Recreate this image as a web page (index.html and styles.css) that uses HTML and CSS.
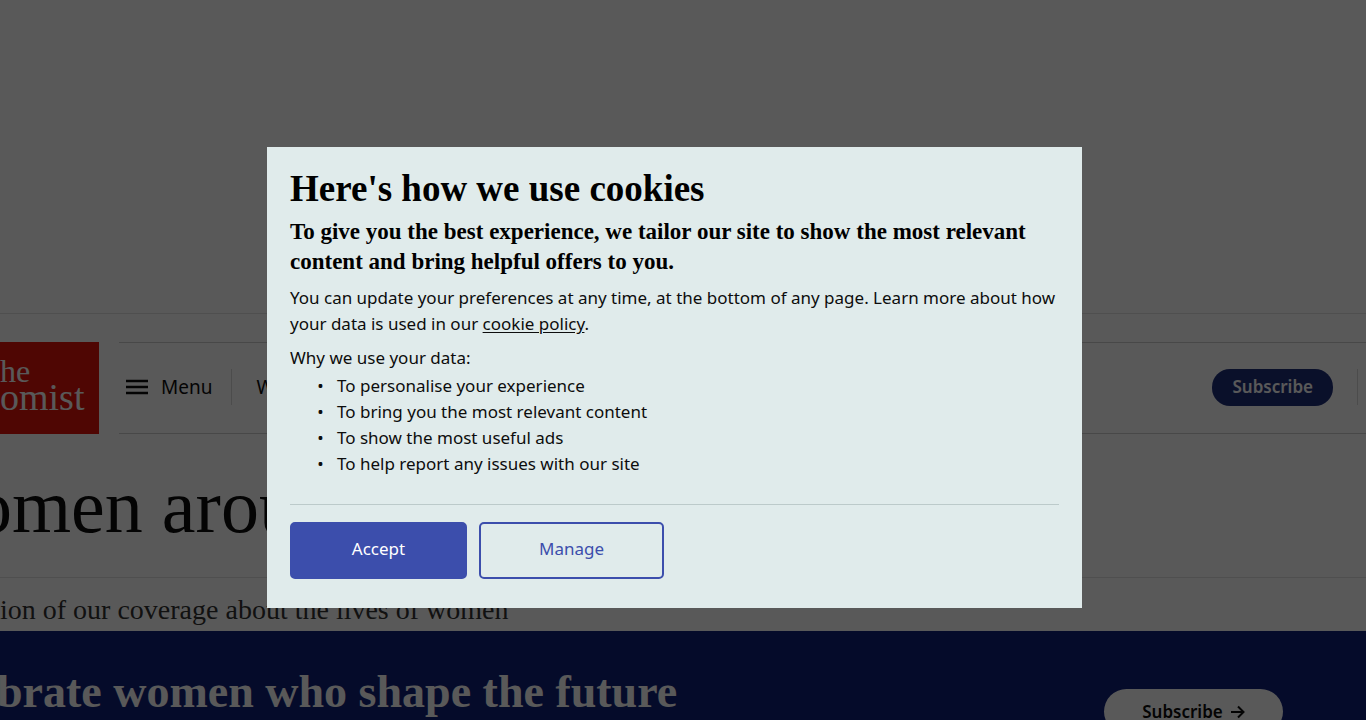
FILE: index.html
```
<!DOCTYPE html>
<html lang="en">
<head>
<meta charset="utf-8">
<meta name="viewport" content="width=device-width, initial-scale=1">
<title>Women around the world | The Economist</title>
<link rel="stylesheet" href="styles.css">
</head>
<body>
<div class="page">
  <div class="ad-slot"></div>
  <header class="masthead">
    <a class="logo" href="#"><span class="logo-top">he</span><span class="logo-bottom">omist</span></a>
    <nav class="nav">
      <button class="menu" type="button">
        <svg class="menu-icon" viewBox="0 0 22 16" aria-hidden="true"><path d="M0 2h22M0 8h22M0 14h22" stroke="currentColor" stroke-width="2.500"/></svg>
        Menu
      </button>
      <a class="nav-link" href="#">Weekly edition</a>
      <a class="subscribe" href="#">Subscribe</a>
      <span class="nav-end"></span>
    </nav>
  </header>
  <main>
    <h1 class="headline">omen around</h1>
    <p class="description">ion of our coverage about the lives of women</p>
  </main>
  <section class="banner">
    <h2 class="banner-title">brate women who shape the future</h2>
    <a class="banner-button" href="#">Subscribe
      <svg class="arrow" viewBox="0 0 14 14" aria-hidden="true"><path d="M0 7h12M7 1.500l5.500 5.500-5.500 5.500" fill="none" stroke="currentColor" stroke-width="2"/></svg>
    </a>
  </section>
</div>
<div class="overlay">
  <section class="dialog" role="dialog" aria-modal="true" aria-labelledby="cookie-title">
    <h2 class="dialog-title" id="cookie-title">Here's how we use cookies</h2>
    <p class="lead">To give you the best experience, we tailor our site to show the most relevant content and bring helpful offers to you.</p>
    <p class="text">You can update your preferences at any time, at the bottom of any page. Learn more about how your data is used in our <a class="policy" href="#">cookie policy</a>.</p>
    <p class="text">Why we use your data:</p>
    <ul class="reasons">
      <li>To personalise your experience</li>
      <li>To bring you the most relevant content</li>
      <li>To show the most useful ads</li>
      <li>To help report any issues with our site</li>
    </ul>
    <div class="actions">
      <button class="button accept" type="button">Accept</button>
      <button class="button manage" type="button">Manage</button>
    </div>
  </section>
</div>
</body>
</html>
```
FILE: styles.css
```
* {
  box-sizing: border-box;
}

body {
  margin: 0;
  background: #fff;
  color: #0d0d0d;
  font-family: "Noto Sans", sans-serif;
  font-size: 17px;
  line-height: 26px;
}

h1, h2, p, ul {
  margin: 0;
}

a {
  color: inherit;
  text-decoration: none;
}

button {
  font: inherit;
  color: inherit;
  cursor: pointer;
}

.page {
  height: 100vh;
  overflow: hidden;
}

.ad-slot {
  height: 314px;
  border-bottom: 1px solid #e1e1e1;
}

.masthead {
  display: flex;
  gap: 20px;
  padding-top: 28px;
}

.logo {
  display: flex;
  flex-direction: column;
  width: 99px;
  height: 92px;
  padding-top: 16px;
  background: #e3120b;
  color: #fff;
  font-family: "Liberation Serif", serif;
  font-size: 32px;
  line-height: 26px;
}

.logo-bottom {
  font-size: 38px;
}

.nav {
  display: flex;
  flex: 1;
  align-items: center;
  height: 92px;
  padding: 0 0 2px 7px;
  border-top: 1px solid #cfcfcf;
  border-bottom: 1px solid #cfcfcf;
  font-size: 19px;
}

.menu {
  display: flex;
  align-items: center;
  gap: 13px;
  height: 36px;
  padding: 0 19px 0 0;
  border: 0;
  border-right: 1px solid #d9d9d9;
  background: none;
}

.menu-icon {
  width: 22px;
  height: 16px;
}

.nav-link {
  padding-left: 24px;
}

.subscribe {
  margin-left: auto;
  padding: 5px 20px 6px;
  border-radius: 18px;
  background: #1f2e7a;
  color: #fff;
  font-size: 17px;
  font-weight: 600;
}

.nav-end {
  width: 33px;
  height: 36px;
  padding-left: 24px;
}

.nav-end::after {
  content: "";
  display: block;
  height: 36px;
  border-left: 1px solid #d9d9d9;
}

.headline {
  margin-left: -26px;
  padding: 32px 0 31px;
  border-bottom: 1px solid #e1e1e1;
  font-family: "Liberation Serif", serif;
  font-size: 76px;
  font-weight: 400;
  line-height: 80px;
  white-space: nowrap;
}

.description {
  padding: 16px 0 5px;
  color: #333;
  font-family: "Liberation Serif", serif;
  font-size: 28px;
  line-height: 32px;
}

.banner {
  display: flex;
  justify-content: space-between;
  align-items: flex-start;
  padding: 34px 83px 40px 0;
  background: #10207a;
  color: #fff;
}

.banner-title {
  margin-left: -3px;
  font-family: "Liberation Serif", serif;
  font-size: 46px;
  line-height: 54px;
}

.banner-button {
  display: flex;
  align-items: center;
  justify-content: center;
  gap: 8px;
  width: 179px;
  height: 45px;
  margin-top: 24px;
  border-radius: 24px;
  background: #fff;
  color: #0d0d0d;
  font-weight: 600;
}

.arrow {
  width: 14px;
  height: 14px;
}

.overlay {
  position: fixed;
  inset: 0;
  display: flex;
  justify-content: center;
  align-items: flex-start;
  padding: 147px 17px 0 0;
  background: rgba(0, 0, 0, 0.65);
}

.dialog {
  width: 100%;
  max-width: 815px;
  padding: 20px 23px 29px;
  background: #e0ebeb;
  color: #0d0d0d;
}

.dialog-title {
  color: #000;
  font-family: "Liberation Serif", serif;
  font-size: 37px;
  line-height: 44px;
}

.lead {
  margin-top: 6px;
  color: #000;
  font-family: "Liberation Serif", serif;
  font-size: 23px;
  font-weight: 700;
  line-height: 30px;
}

.text {
  margin-top: 8px;
}

.policy {
  text-decoration: underline;
  text-underline-offset: 2px;
}

.reasons {
  margin-top: 2px;
  padding: 0 0 27px 47px;
  list-style-type: "•\00a0\00a0\00a0";
}

.actions {
  display: flex;
  gap: 12px;
  padding-top: 17px;
  border-top: 1px solid #bccaca;
}

.button {
  height: 57px;
  padding: 0 0 4px;
  border: 2px solid #3c4eac;
  border-radius: 5px;
}

.accept {
  width: 177px;
  background: #3c4eac;
  color: #fff;
}

.manage {
  width: 185px;
  background: none;
  color: #3c4eac;
}
```
